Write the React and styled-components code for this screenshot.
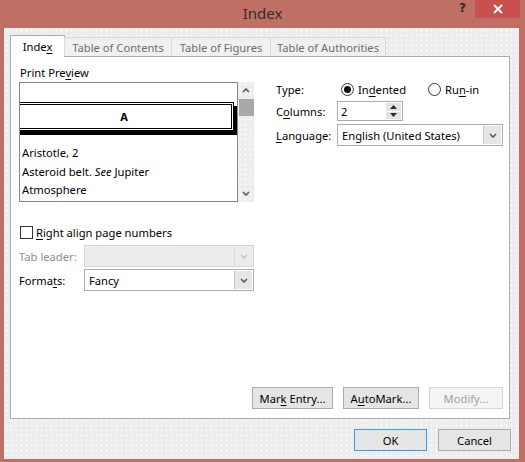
import React from 'react'
import styled, { createGlobalStyle } from 'styled-components'

const GlobalStyle = createGlobalStyle`
    html, body {
        margin: 0;
        padding: 0;
    }
    body {
        font-family: "Noto Sans", "Liberation Sans", sans-serif;
        font-size: 11.2px;
        color: #000;
    }
`

const Chevron = ({ up, color = '#5a5a5a', size = 8 }) => (
    <svg width={size} height={size / 2 + 1} viewBox="0 0 8 5">
        <polyline
            points={up ? '1,4 4,1 7,4' : '1,1 4,4 7,1'}
            fill="none"
            stroke={color}
            strokeWidth="1.6"
        />
    </svg>
)

const Triangle = ({ up }) => (
    <svg width="7" height="4" viewBox="0 0 7 4">
        <polygon points={up ? '0,4 3.5,0 7,4' : '0,0 3.5,4 7,0'} fill="#2b2b2b" />
    </svg>
)

const App = () => {
    return (
        <>
            <GlobalStyle />
            <Frame>
                <TitleBar>
                    <span />
                    <Title>Index</Title>
                    <Controls>
                        <Help>?</Help>
                        <CloseButton>
                            <svg width="10" height="10" viewBox="0 0 10 10">
                                <path d="M1 1 L9 9 M9 1 L1 9" stroke="#fff" strokeWidth="1.8" />
                            </svg>
                        </CloseButton>
                    </Controls>
                </TitleBar>
                <Client>
                    <TabRow>
                        <Tab active w={55}><span>Inde<U>x</U></span></Tab>
                        <Tab w={108}>Table of Contents</Tab>
                        <Tab w={100}>Table of Figures</Tab>
                        <Tab w={116}>Table of Authorities</Tab>
                    </TabRow>
                    <Panel>
                        <Columns>
                            <LeftCol>
                                <Caption>Print Pre<U>v</U>iew</Caption>
                                <PreviewWrap>
                                    <ListBox>
                                        <HeadingBox>A</HeadingBox>
                                        <Entries>
                                            <Entry>Aristotle, 2</Entry>
                                            <Entry>Asteroid belt. <i>See</i> Jupiter</Entry>
                                            <Entry>Atmosphere</Entry>
                                        </Entries>
                                    </ListBox>
                                    <ScrollBar>
                                        <ScrollArrow><Chevron up /></ScrollArrow>
                                        <Thumb />
                                        <ScrollArrow><Chevron /></ScrollArrow>
                                    </ScrollBar>
                                </PreviewWrap>
                                <CheckRow>
                                    <CheckBox />
                                    <span><U>R</U>ight align page numbers</span>
                                </CheckRow>
                                <FieldRow top={5}>
                                    <FieldLabel w={65} disabled>Tab leader:</FieldLabel>
                                    <Select w={170} disabled>
                                        <SelectValue />
                                        <SelectArrow disabled><Chevron color="#c4c4c4" /></SelectArrow>
                                    </Select>
                                </FieldRow>
                                <FieldRow top={2}>
                                    <FieldLabel w={65}>Forma<U>t</U>s:</FieldLabel>
                                    <Select w={170}>
                                        <SelectValue>Fancy</SelectValue>
                                        <SelectArrow><Chevron /></SelectArrow>
                                    </Select>
                                </FieldRow>
                            </LeftCol>
                            <RightCol>
                                <FieldRow h={15}>
                                    <FieldLabel w={63}>Type:</FieldLabel>
                                    <RadioOption w={87}>
                                        <Radio checked />
                                        <span>In<U>d</U>ented</span>
                                    </RadioOption>
                                    <RadioOption>
                                        <Radio />
                                        <span>Ru<U>n</U>-in</span>
                                    </RadioOption>
                                </FieldRow>
                                <FieldRow top={4} h={20}>
                                    <FieldLabel w={61}>C<U>o</U>lumns:</FieldLabel>
                                    <Spin>
                                        <SpinValue>2</SpinValue>
                                        <SpinButtons>
                                            <SpinButton><Triangle up /></SpinButton>
                                            <SpinButton><Triangle /></SpinButton>
                                        </SpinButtons>
                                    </Spin>
                                </FieldRow>
                                <FieldRow top={3}>
                                    <FieldLabel w={61}><U>L</U>anguage:</FieldLabel>
                                    <Select w={166}>
                                        <SelectValue>English (United States)</SelectValue>
                                        <SelectArrow><Chevron /></SelectArrow>
                                    </Select>
                                </FieldRow>
                            </RightCol>
                        </Columns>
                        <ButtonRow gap={10}>
                            <Button w={81}><span>Mar<U>k</U> Entry...</span></Button>
                            <Button w={76}><span>A<U>u</U>toMark...</span></Button>
                            <Button w={74} disabled>Modify...</Button>
                        </ButtonRow>
                    </Panel>
                    <Footer>
                        <Button w={73} primary>OK</Button>
                        <Button w={73}>Cancel</Button>
                    </Footer>
                </Client>
            </Frame>
        </>
    )
}
export default App

const Frame = styled.div`
    width: 525px;
    height: 462px;
    background: #bf6f64;
    display: flex;
    flex-direction: column;
    box-sizing: border-box;
`
const TitleBar = styled.div`
    height: 28px;
    display: grid;
    grid-template-columns: 1fr auto 1fr;
    align-items: start;
`
const Title = styled.div`
    font-size: 15px;
    line-height: 18px;
    margin-top: 4px;
    color: #2e2e2e;
`
const Controls = styled.div`
    justify-self: end;
    display: flex;
    align-items: flex-start;
    margin-right: 5px;
`
const Help = styled.div`
    font-family: "DejaVu Sans", sans-serif;
    font-weight: bold;
    font-size: 12px;
    line-height: 14px;
    margin-top: 1px;
    margin-right: 9px;
    color: #2a2a2a;
`
const CloseButton = styled.div`
    width: 45px;
    height: 18px;
    background: #c75050;
    display: flex;
    align-items: center;
    justify-content: center;
`
const Client = styled.div`
    margin: 0 6px 3px 4px;
    height: 431px;
    box-sizing: border-box;
    padding: 7px 8px 8px 6px;
    background-color: #ececec;
    background-image: radial-gradient(circle, #fbfbfb 0.8px, transparent 1.2px);
    background-size: 5px 5px;
    display: flex;
    flex-direction: column;
`
const TabRow = styled.div`
    display: flex;
    align-items: flex-end;
    height: 22px;
    margin-bottom: -1px;
    position: relative;
    z-index: 1;
`
const Tab = styled.div`
    width: ${p => p.w}px;
    box-sizing: border-box;
    height: ${p => (p.active ? 22 : 19)}px;
    margin-bottom: ${p => (p.active ? 0 : 1)}px;
    margin-left: ${p => (p.active ? 0 : -1)}px;
    border: 1px solid ${p => (p.active ? '#acacac' : '#d9d9d9')};
    border-bottom: none;
    background: ${p => (p.active ? '#fff' : '#f0f0f0')};
    color: ${p => (p.active ? '#000' : '#6d6d6d')};
    display: flex;
    align-items: center;
    justify-content: center;
    padding-top: ${p => (p.active ? 0 : 1)}px;
    &:first-child {
        margin-left: 0;
    }
`
const U = styled.span`
    text-decoration: underline;
    text-underline-offset: 2px;
`
const Panel = styled.div`
    width: 500px;
    height: 363px;
    box-sizing: border-box;
    border: 1px solid #acacac;
    background: #fff;
    padding: 9px 6px 9px 8px;
    display: flex;
    flex-direction: column;
`
const Columns = styled.div`
    display: flex;
    gap: 22px;
`
const LeftCol = styled.div`
    width: 235px;
    display: flex;
    flex-direction: column;
`
const RightCol = styled.div`
    width: 227px;
    padding-top: 16px;
    display: flex;
    flex-direction: column;
`
const Caption = styled.div`
    line-height: 14px;
    margin-bottom: 2px;
    padding-left: 1px;
`
const PreviewWrap = styled.div`
    display: flex;
    height: 120px;
`
const ListBox = styled.div`
    width: 219px;
    box-sizing: border-box;
    border: 1px solid #828790;
    background: #fff;
    overflow: hidden;
`
const HeadingBox = styled.div`
    margin: 19px 0 0 -6px;
    width: 220px;
    height: 29px;
    box-sizing: border-box;
    border: 3px double #000;
    box-shadow: 4px 4px 0 #000;
    display: flex;
    align-items: center;
    justify-content: center;
    font-weight: bold;
    font-size: 11px;
`
const Entries = styled.div`
    margin-top: 13px;
    padding-left: 2px;
`
const Entry = styled.div`
    line-height: 18.5px;
    white-space: nowrap;
`
const ScrollBar = styled.div`
    width: 16px;
    display: flex;
    flex-direction: column;
    align-items: center;
    background-color: #ededed;
    background-image: radial-gradient(circle, #fbfbfb 0.8px, transparent 1.2px);
    background-size: 5px 5px;
`
const ScrollArrow = styled.div`
    height: 17px;
    width: 100%;
    display: flex;
    align-items: center;
    justify-content: center;
    &:last-child {
        margin-top: auto;
    }
`
const Thumb = styled.div`
    width: 15px;
    height: 17px;
    background: #a9a9a9;
`
const CheckRow = styled.div`
    display: flex;
    align-items: center;
    gap: 3px;
    height: 16px;
    margin-top: 22px;
    padding-left: 1px;
`
const CheckBox = styled.div`
    width: 13px;
    height: 13px;
    box-sizing: border-box;
    border: 1px solid #333;
    background: #fff;
`
const FieldRow = styled.div`
    display: flex;
    align-items: center;
    height: ${p => p.h || 22}px;
    margin-top: ${p => p.top || 0}px;
`
const FieldLabel = styled.div`
    width: ${p => p.w}px;
    flex: none;
    color: ${p => (p.disabled ? '#8d8d8d' : '#000')};
`
const Select = styled.div`
    width: ${p => p.w}px;
    height: 22px;
    box-sizing: border-box;
    border: 1px solid ${p => (p.disabled ? '#d5d5d5' : '#acacac')};
    background: ${p => (p.disabled ? '#ececec' : '#fff')};
    display: flex;
    align-items: stretch;
    padding: 1px;
`
const SelectValue = styled.div`
    flex: 1;
    display: flex;
    align-items: center;
    padding-left: 3px;
`
const SelectArrow = styled.div`
    width: 17px;
    display: flex;
    align-items: center;
    justify-content: center;
    background: ${p => (p.disabled ? 'transparent' : '#e6e6e6')};
    border-left: 1px solid ${p => (p.disabled ? '#dcdcdc' : '#c8c8c8')};
`
const RadioOption = styled.div`
    display: flex;
    align-items: center;
    gap: 4px;
    width: ${p => (p.w ? `${p.w}px` : 'auto')};
    padding-left: 2px;
    box-sizing: border-box;
`
const Radio = styled.div`
    width: 13px;
    height: 13px;
    box-sizing: border-box;
    border-radius: 50%;
    border: 1px solid #333;
    background: #fff;
    display: flex;
    align-items: center;
    justify-content: center;
    &::after {
        content: '';
        width: 7px;
        height: 7px;
        border-radius: 50%;
        background: ${p => (p.checked ? '#111' : 'transparent')};
    }
`
const Spin = styled.div`
    width: 66px;
    height: 20px;
    box-sizing: border-box;
    border: 1px solid #acacac;
    background: #fff;
    display: flex;
    padding: 1px 1px 1px 0;
`
const SpinValue = styled.div`
    flex: 1;
    padding-left: 3px;
    display: flex;
    align-items: center;
`
const SpinButtons = styled.div`
    width: 15px;
    display: flex;
    flex-direction: column;
    gap: 1px;
    background: #fff;
`
const SpinButton = styled.div`
    flex: 1;
    background: #e3e3e3;
    display: flex;
    align-items: center;
    justify-content: center;
`
const ButtonRow = styled.div`
    margin-top: auto;
    display: flex;
    justify-content: flex-end;
    gap: ${p => p.gap}px;
`
const Button = styled.div`
    width: ${p => p.w}px;
    height: 22px;
    box-sizing: border-box;
    border: 1px solid ${p => (p.primary ? '#3c9be8' : p.disabled ? '#d5d5d5' : '#acacac')};
    background: ${p => (p.disabled ? '#f4f4f4' : '#e5e5e5')};
    color: ${p => (p.disabled ? '#a0a0a0' : '#000')};
    display: flex;
    align-items: center;
    justify-content: center;
`
const Footer = styled.div`
    margin-top: 10px;
    display: flex;
    justify-content: flex-end;
    gap: 11px;
`
